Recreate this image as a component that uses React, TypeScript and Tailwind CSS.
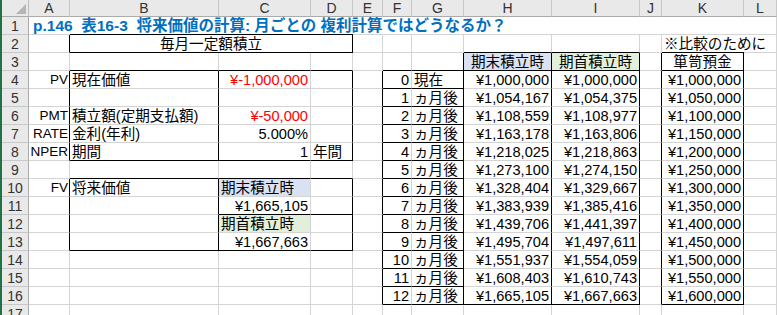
import clsx from "clsx";

type Cell = {
    t?: string;
    span?: 2 | 3 | 12;
    al?: "l" | "r" | "c";
    r?: boolean; // dark right border
    b?: boolean; // dark bottom border
    top?: boolean; // dark top border drawn over the row above
    fill?: "blue" | "green";
    red?: boolean;
    title?: boolean;
    sm?: boolean; // the short latin labels in column A
};

const COLS = ["A", "B", "C", "D", "E", "F", "G", "H", "I", "J", "K", "L"];

const FONT = { fontFamily: '"Liberation Sans", "Noto Sans CJK JP", sans-serif' };

// F..L block, rows 4-16
const table: [string, string, string, string, string][] = [
    ["0", "現在", "¥1,000,000", "¥1,000,000", "¥1,000,000"],
    ["1", "ヵ月後", "¥1,054,167", "¥1,054,375", "¥1,050,000"],
    ["2", "ヵ月後", "¥1,108,559", "¥1,108,977", "¥1,100,000"],
    ["3", "ヵ月後", "¥1,163,178", "¥1,163,806", "¥1,150,000"],
    ["4", "ヵ月後", "¥1,218,025", "¥1,218,863", "¥1,200,000"],
    ["5", "ヵ月後", "¥1,273,100", "¥1,274,150", "¥1,250,000"],
    ["6", "ヵ月後", "¥1,328,404", "¥1,329,667", "¥1,300,000"],
    ["7", "ヵ月後", "¥1,383,939", "¥1,385,416", "¥1,350,000"],
    ["8", "ヵ月後", "¥1,439,706", "¥1,441,397", "¥1,400,000"],
    ["9", "ヵ月後", "¥1,495,704", "¥1,497,611", "¥1,450,000"],
    ["10", "ヵ月後", "¥1,551,937", "¥1,554,059", "¥1,500,000"],
    ["11", "ヵ月後", "¥1,608,403", "¥1,610,743", "¥1,550,000"],
    ["12", "ヵ月後", "¥1,665,105", "¥1,667,663", "¥1,600,000"],
];

// A..D block, rows 4-16
const left: Cell[][] = [
    [{ t: "PV", al: "r", r: true, sm: true }, { t: "現在価値", r: true }, { t: "¥-1,000,000", al: "r", red: true }, { r: true }],
    [{ r: true }, { r: true }, {}, { r: true }],
    [{ t: "PMT", al: "r", r: true, sm: true }, { t: "積立額(定期支払額)", r: true }, { t: "¥-50,000", al: "r", red: true }, { r: true }],
    [{ t: "RATE", al: "r", r: true, sm: true }, { t: "金利(年利)", r: true }, { t: "5.000%", al: "r" }, { r: true }],
    [{ t: "NPER", al: "r", r: true, sm: true }, { t: "期間", r: true, b: true }, { t: "1", al: "r", b: true }, { t: "年間", r: true, b: true }],
    [{}, { b: true }, { b: true }, { b: true }],
    [{ t: "FV", al: "r", r: true, sm: true }, { t: "将来価値", r: true }, { t: "期末積立時", fill: "blue" }, { r: true }],
    [{ r: true }, { r: true }, { t: "¥1,665,105", al: "r", b: true }, { r: true, b: true }],
    [{ r: true }, { r: true }, { t: "期首積立時", fill: "green" }, { r: true }],
    [{ r: true }, { r: true, b: true }, { t: "¥1,667,663", al: "r", b: true }, { r: true, b: true }],
    [{}, {}, {}, {}],
    [{}, {}, {}, {}],
    [{}, {}, {}, {}],
];

const rows: Cell[][] = [
    [{ t: "p.146  表16-3  将来価値の計算: 月ごとの 複利計算ではどうなるか？", span: 12, title: true }],
    [
        { r: true },
        { t: "毎月一定額積立", span: 3, al: "c", r: true, b: true, top: true },
        {}, {}, {},
        { b: true }, { b: true }, {},
        { t: "※比較のために", span: 2 },
    ],
    [
        {}, { b: true }, { b: true }, { b: true }, {},
        { b: true }, { r: true, b: true },
        { t: "期末積立時", al: "c", r: true, b: true, fill: "blue" },
        { t: "期首積立時", al: "c", r: true, b: true, fill: "green" },
        { r: true },
        { t: "箪笥預金", al: "c", r: true, b: true, top: true },
        {},
    ],
    ...table.map((row, i) => {
        const last = i === table.length - 1;
        const [n, label, h, iv, k] = row;
        return [
            ...left[i],
            { r: true },
            { t: n, al: "r", b: true },
            { t: label, r: true, b: true },
            { t: h, al: "r", r: true, b: last },
            { t: iv, al: "r", r: true, b: last },
            { r: true },
            { t: k, al: "r", r: true, b: last },
            {},
        ] as Cell[];
    }),
    COLS.map(() => ({})),
];

function SheetCell({ c }: { c: Cell }) {
    return (
        <div
            className={clsx(
                "h-[18px] border-r border-b leading-[18px] whitespace-pre overflow-hidden",
                c.r ? "border-r-black" : "border-r-[#D4D4D4]",
                c.b ? "border-b-black" : "border-b-[#D4D4D4]",
                c.top && "shadow-[0_-1px_0_#000]",
                c.fill === "blue" && "bg-[#D9E1F2]",
                c.fill === "green" && "bg-[#E2EFDA]",
                c.al === "r" && "text-right",
                c.al === "c" && "text-center",
                c.title
                    ? "font-bold text-[15.5px] text-[#0070C0] pl-[4px]"
                    : c.sm
                        ? "text-[13.5px] text-black px-[1px]"
                        : c.red
                            ? "text-[14.6px] text-[#FF0000] px-[2px]"
                            : "text-[14.6px] text-black px-[2px]",
                c.span === 2 && "col-span-2",
                c.span === 3 && "col-span-3",
                c.span === 12 && "col-span-12"
            )}
        >
            {c.t}
        </div>
    );
}

export default function App() {
    return (
        <div className="w-[777px] h-[315px] overflow-hidden bg-white border-l-2 border-l-[#217346]" style={FONT}>
            <div className="grid grid-cols-[27px_41px_149px_92px_42px_30px_29px_52px_88px_88px_22px_82px_1fr]">

                {/* Column headers */}
                <div className="h-[17px] bg-[#E9E9E9] border-r border-b border-r-[#BDBDBD] border-b-[#ABABAB] flex items-end justify-end p-[2px]">
                    <svg width="10" height="10" viewBox="0 0 10 10">
                        <polygon points="10,0 10,10 0,10" fill="#B5B5B5" />
                    </svg>
                </div>
                {COLS.map((col) => (
                    <div
                        key={col}
                        className="h-[17px] bg-[#E9E9E9] border-r border-b border-r-[#C8C8C8] border-b-[#ABABAB] text-center leading-[17px] text-[14px] text-[#333]"
                    >
                        {col}
                    </div>
                ))}

                {/* Rows */}
                {rows.map((row, ri) => (
                    <div key={ri} className="contents">
                        <div className="h-[18px] bg-[#E9E9E9] border-r border-b border-r-[#ABABAB] border-b-[#C8C8C8] text-center leading-[18px] text-[14px] text-[#333]">
                            {ri + 1}
                        </div>
                        {row.map((c, ci) => (
                            <SheetCell key={ci} c={c} />
                        ))}
                    </div>
                ))}
            </div>
        </div>
    );
}
